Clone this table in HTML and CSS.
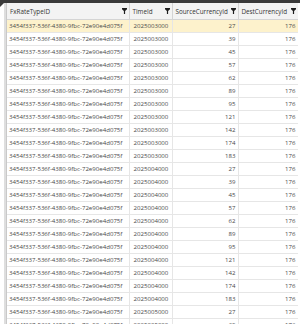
FILE: index.html
```html
<!DOCTYPE html>
<html>
<head>
<meta charset="utf-8">
<link rel="stylesheet" href="styles.css">
</head>
<body>
<div class="topbar"></div>
<div class="grid">
  <div class="rowhead">
    <div class="corner"></div>
    <div class="rh-bar"></div>
  </div>
  <div class="table-wrap">
    <table class="tbl">
      <colgroup>
        <col class="c1"><col class="c2"><col class="c3"><col class="c4">
      </colgroup>
      <thead>
        <tr>
          <th><span>FxRateTypeID</span><svg class="flt" viewBox="0 0 5 6"><path d="M0 0h5v1.3L3.1 3v3H1.9V3L0 1.3z"/></svg></th>
          <th><span>TimeId</span><svg class="flt" viewBox="0 0 5 6"><path d="M0 0h5v1.3L3.1 3v3H1.9V3L0 1.3z"/></svg></th>
          <th><span>SourceCurrencyId</span><svg class="flt" viewBox="0 0 5 6"><path d="M0 0h5v1.3L3.1 3v3H1.9V3L0 1.3z"/></svg></th>
          <th><span>DestCurrencyId</span><svg class="flt" viewBox="0 0 5 6"><path d="M0 0h5v1.3L3.1 3v3H1.9V3L0 1.3z"/></svg></th>
        </tr>
      </thead>
      <tbody id="rows"></tbody>
    </table>
  </div>
</div>
<script src="app.js"></script>
</body>
</html>
```

FILE: app.js
```js
(function () {
  var ids = [27, 39, 45, 57, 62, 89, 95, 121, 142, 174, 183];
  var times = ["2025003000", "2025004000", "2025005000"];
  var tb = document.getElementById("rows");
  var html = "";
  var first = true;
  times.forEach(function (t) {
    ids.forEach(function (id) {
      html += '<tr' + (first ? ' class="sel"' : '') + '><td>3454f337-536f-4380-9fbc-72e90e4d075f</td><td>' +
        t + '</td><td class="num">' + id + '</td><td class="num">176</td></tr>';
      first = false;
    });
  });
  tb.innerHTML = html;
})();
```

FILE: styles.css
```css
html, body {
  margin: 0;
  padding: 0;
  background: #ffffff;
}
body {
  width: 300px;
  height: 324px;
  overflow: hidden;
  font-family: "Open Sans", "Noto Sans", sans-serif;
  font-size: 6.1px;
  color: #4a4a4a;
}
.topbar {
  height: 3px;
  background: #3a3a3a;
}
.grid {
  display: flex;
  height: 321px;
  overflow: hidden;
}
.rowhead {
  width: 7px;
  flex: none;
  position: relative;
  background: #ffffff;
  border-right: 1px solid #c9c9c9;
  box-sizing: border-box;
}
.corner {
  position: absolute;
  left: 0;
  top: 0;
  width: 0;
  height: 0;
  border-top: 4px solid #3a3a3a;
  border-right: 4px solid transparent;
}
.rh-bar {
  position: absolute;
  left: 4px;
  top: 0;
  bottom: 0;
  width: 2px;
  background: #dedede;
}
.table-wrap {
  flex: none;
  width: 291px;
  overflow: hidden;
}
.tbl {
  border-collapse: collapse;
  table-layout: fixed;
  width: 291px;
}
.c1 { width: 122px; }
.c2 { width: 43px; }
.c3 { width: 66px; }
.c4 { width: 60px; }
th {
  height: 16px;
  padding: 0 1px 0 3px;
  background: #f3f3f3;
  border-right: 1px solid #d4d4d4;
  border-bottom: 1px solid #d4d4d4;
  font-weight: normal;
  font-size: 6.3px;
  text-align: left;
  color: #333333;
  white-space: nowrap;
  position: relative;
}
th span {
  display: inline-block;
  vertical-align: middle;
}
.flt {
  position: absolute;
  right: 2px;
  top: 5px;
  width: 5px;
  height: 6px;
  fill: #1e1e1e;
}
td {
  height: 12px;
  padding: 0 2px 0 2px;
  border-right: 1px solid #e6e6e6;
  border-bottom: 1px solid #e6e6e6;
  white-space: nowrap;
  overflow: hidden;
  line-height: 12px;
  color: #4a4a4a;
}
td:first-child {
  padding-left: 2px;
}
td:nth-child(2) {
  padding-left: 4px;
}
td.num {
  text-align: right;
  padding-right: 2px;
}
tr.sel td {
  background: #fdf2cc;
}
```
